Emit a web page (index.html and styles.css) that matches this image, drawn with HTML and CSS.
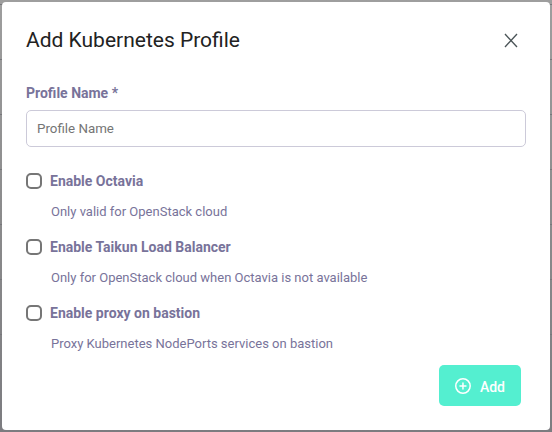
FILE: index.html
```html
<!DOCTYPE html>
<html lang="en">
<head>
<meta charset="utf-8">
<title>Add Kubernetes Profile</title>
<link rel="stylesheet" href="styles.css">
</head>
<body>
<main class="dialog">
  <header class="dialog-header">
    <h1 class="title">Add Kubernetes Profile</h1>
    <button class="close" type="button" aria-label="Close">
      <svg width="14" height="14" viewBox="0 0 14 14"><path d="M1 1 13 14M13 1 1 14" fill="none" stroke="#4b5558" stroke-width="1.35"/></svg>
    </button>
  </header>
  <form class="form">
    <label class="label" for="name">Profile Name *</label>
    <input class="input" id="name" type="text" placeholder="Profile Name">
    <div class="option">
      <label class="option-label"><input class="check" type="checkbox">Enable Octavia</label>
      <p class="hint">Only valid for OpenStack cloud</p>
    </div>
    <div class="option">
      <label class="option-label"><input class="check" type="checkbox">Enable Taikun Load Balancer</label>
      <p class="hint">Only for OpenStack cloud when Octavia is not available</p>
    </div>
    <div class="option">
      <label class="option-label"><input class="check" type="checkbox">Enable proxy on bastion</label>
      <p class="hint">Proxy Kubernetes NodePorts services on bastion</p>
    </div>
    <button class="add" type="button">
      <svg width="16" height="16" viewBox="0 0 16 16"><circle cx="8" cy="8" r="7.25" fill="none" stroke="#fff" stroke-width="1.5"/><path d="M8 5v6M5 8h6" stroke="#fff" stroke-width="1.5" stroke-linecap="round"/></svg>
      <span>Add</span>
    </button>
  </form>
</main>
</body>
</html>
```
FILE: styles.css
```css
* { box-sizing: border-box; }
body {
  margin: 0;
  height: 432px;
  padding: 2px;
  overflow: hidden;
  font-family: Roboto, "Liberation Sans", sans-serif;
  background:
    repeating-linear-gradient(to bottom, transparent 0 4px, #77777b 4px 5px, transparent 5px 55px) 0 0 / 100% 340px no-repeat,
    linear-gradient(to bottom, #9e9e9e 0, #8b8b8c 50%, #7c7c80 100%);
}
.dialog {
  height: 428px;
  padding: 24px;
  background: #fff;
  border-radius: 4px;
}
.dialog-header {
  display: flex;
  justify-content: space-between;
  align-items: center;
  height: 28px;
}
.title {
  margin: 0;
  font-size: 21px;
  line-height: 28px;
  font-weight: 400;
  color: #222;
}
.close {
  display: flex;
  margin: 0 8px 0 0;
  padding: 0;
  border: 0;
  background: none;
}
.close svg { overflow: visible; }
.form {
  display: flex;
  flex-direction: column;
}
.label {
  margin-top: 29px;
  font-size: 14px;
  line-height: 20px;
  font-weight: 700;
  color: #78739a;
}
.input {
  height: 37px;
  margin: 7px 0 24px;
  padding: 0 10px;
  border: 1px solid #cccad9;
  border-radius: 5px;
  background: #fff;
  font: 13.333px Roboto, "Liberation Sans", sans-serif;
}
.input::placeholder { color: #757575; }
.option { height: 66px; }
.option-label {
  display: flex;
  align-items: center;
  gap: 8px;
  height: 20px;
  font-size: 14px;
  line-height: 20px;
  font-weight: 700;
  color: #78739a;
}
.check {
  appearance: none;
  width: 16px;
  height: 16px;
  margin: 0;
  border: 2px solid #767676;
  border-radius: 5px;
  background: #fff;
}
.hint {
  margin: 11px 0 0 25px;
  font-size: 13px;
  line-height: 20px;
  color: #78739a;
}
.add {
  display: flex;
  align-items: center;
  align-self: flex-end;
  gap: 9px;
  width: 82px;
  height: 41px;
  margin: -4px 5px 0 0;
  padding: 0 16px;
  border: 0;
  border-radius: 5px;
  background: #54efd0;
  color: #fff;
  font: 500 14px/20px Roboto, "Liberation Sans", sans-serif;
}
.add span { margin-top: 2px; }
```
